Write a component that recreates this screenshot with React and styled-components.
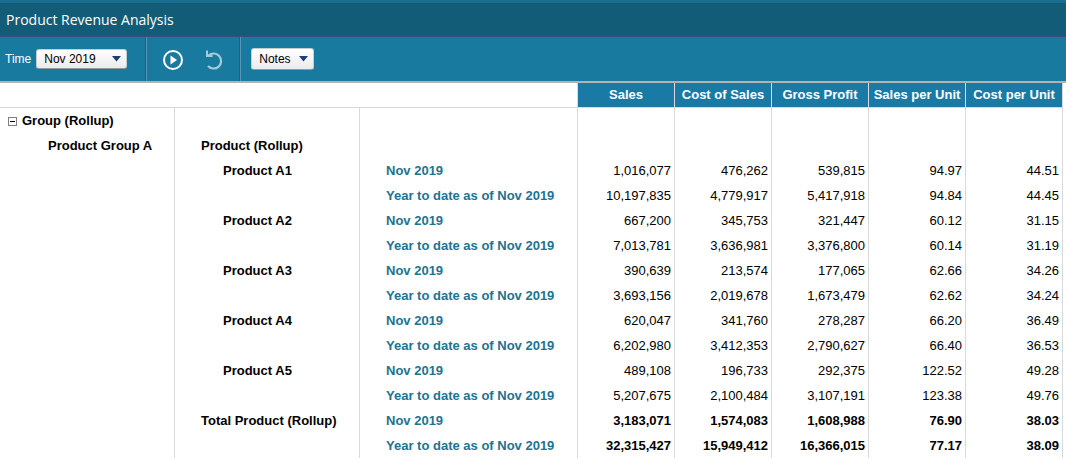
import React from 'react';
import styled, { createGlobalStyle } from 'styled-components';

const GlobalStyle = createGlobalStyle`
  * {
    box-sizing: border-box;
  }

  body {
    margin: 0;
    background: #fff;
    color: #000;
    font-family: "Liberation Sans", Arial, sans-serif;
    font-size: 13px;
  }
`;

const TitleBar = styled.header`
  display: flex;
  align-items: center;
  height: 37px;
  padding: 1px 6px 0;
  background: #135c78;
  border-top: 3px solid #196e90;
  border-bottom: 1px solid #37507f;
`;

const Title = styled.h1`
  margin: 0;
  color: #fff;
  font-family: "Open Sans", "Segoe UI", sans-serif;
  font-size: 14px;
  font-weight: 400;
  line-height: 20px;
`;

const Toolbar = styled.div`
  display: flex;
  height: 46px;
  background: #187a9f;
  border-bottom: 2px solid #b2b2b2;
`;

const Group = styled.div`
  display: flex;
  align-items: center;
  gap: ${props => props.$gap || 0}px;
  padding: ${props => props.$padding};
  border-right: ${props => (props.$divider ? '1px solid #5498b2' : 'none')};
  box-shadow: ${props => (props.$divider ? 'inset -1px 0 #146784' : 'none')};
`;

const Label = styled.label`
  color: #fff;
  font-size: 12px;
  line-height: 20px;
`;

const Picker = styled.div`
  display: grid;
  align-items: center;
  width: ${props => props.$width}px;

  > * {
    grid-area: 1 / 1;
  }
`;

const Select = styled.select`
  appearance: none;
  width: 100%;
  height: ${props => props.$height}px;
  margin: 0;
  padding: 0 20px 0 7px;
  border: 1px solid #c3ccd0;
  border-bottom-color: #999;
  border-radius: 3px;
  background: linear-gradient(#fff, #ebebeb);
  color: #000;
  font-family: inherit;
  font-size: 12px;
`;

const Arrow = styled.svg`
  justify-self: end;
  margin-right: 6px;
  pointer-events: none;
`;

const IconButton = styled.button`
  display: flex;
  padding: 0;
  border: 0;
  background: none;
  cursor: pointer;
`;

const Scroller = styled.main`
  padding-right: 3px;
`;

const Table = styled.table`
  width: 100%;
  table-layout: fixed;
  border-collapse: separate;
  border-spacing: 0;
`;

const Col = styled.col`
  width: ${props => (props.$width ? props.$width + 'px' : 'auto')};
`;

const HeadCell = styled.th`
  height: 25px;
  padding: 0;
  border-right: 1px solid #d9d9d9;
  border-bottom: 1px solid #d9d9d9;
  background: #187aa5;
  color: #fff;
  font-size: 13px;
  line-height: 24px;
  white-space: nowrap;
`;

const Corner = styled.td`
  height: 25px;
  padding: 0;
  border-right: ${props => (props.$last ? '1px solid #d9d9d9' : 'none')};
  border-bottom: 1px solid #d9d9d9;
`;

const Cell = styled.td`
  height: 25px;
  padding: 0 3px 0 ${props => props.$indent || 3}px;
  border-right: 1px solid #d9d9d9;
  line-height: 24px;
  white-space: nowrap;
`;

const NameCell = styled(Cell)`
  font-weight: 700;
`;

const PeriodCell = styled(Cell)`
  color: #207491;
  font-weight: 700;
`;

const NumberCell = styled(Cell)`
  font-weight: ${props => (props.$total ? 700 : 400)};
  text-align: right;
`;

const Toggle = styled.button`
  display: inline-flex;
  margin: 0 5px 0 0;
  padding: 0;
  border: 0;
  background: none;
  vertical-align: -1px;
`;

const COLUMNS = ['Sales', 'Cost of Sales', 'Gross Profit', 'Sales per Unit', 'Cost per Unit'];
const BLANK = ['', '', '', '', ''];
const MONTH = 'Nov 2019';
const YTD = 'Year to date as of Nov 2019';

const ROWS = [
  { group: 'Group (Rollup)', expandable: true, values: BLANK },
  { group: 'Product Group A', product: 'Product (Rollup)', values: BLANK },
  { product: 'Product A1', leaf: true, period: MONTH, values: ['1,016,077', '476,262', '539,815', '94.97', '44.51'] },
  { period: YTD, values: ['10,197,835', '4,779,917', '5,417,918', '94.84', '44.45'] },
  { product: 'Product A2', leaf: true, period: MONTH, values: ['667,200', '345,753', '321,447', '60.12', '31.15'] },
  { period: YTD, values: ['7,013,781', '3,636,981', '3,376,800', '60.14', '31.19'] },
  { product: 'Product A3', leaf: true, period: MONTH, values: ['390,639', '213,574', '177,065', '62.66', '34.26'] },
  { period: YTD, values: ['3,693,156', '2,019,678', '1,673,479', '62.62', '34.24'] },
  { product: 'Product A4', leaf: true, period: MONTH, values: ['620,047', '341,760', '278,287', '66.20', '36.49'] },
  { period: YTD, values: ['6,202,980', '3,412,353', '2,790,627', '66.40', '36.53'] },
  { product: 'Product A5', leaf: true, period: MONTH, values: ['489,108', '196,733', '292,375', '122.52', '49.28'] },
  { period: YTD, values: ['5,207,675', '2,100,484', '3,107,191', '123.38', '49.76'] },
  { product: 'Total Product (Rollup)', total: true, period: MONTH, values: ['3,183,071', '1,574,083', '1,608,988', '76.90', '38.03'] },
  { total: true, period: YTD, values: ['32,315,427', '15,949,412', '16,366,015', '77.17', '38.09'] },
];

function DownArrow() {
  return (
    <Arrow width="9" height="6" viewBox="0 0 9 6" aria-hidden="true">
      <path d="M0 0h9L4.5 5.5z" fill="#1f3f7c" />
    </Arrow>
  );
}

function PlayIcon() {
  return (
    <svg width="20" height="20" viewBox="0 0 20 20" aria-hidden="true">
      <circle cx="10" cy="10" r="9" fill="none" stroke="#fff" strokeWidth="2" />
      <path d="M7.5 5.5v9l6.5-4.5z" fill="#fff" />
    </svg>
  );
}

function UndoIcon() {
  return (
    <svg width="18" height="20" viewBox="0 0 18 20" fill="none" stroke="#a5cbd9" aria-hidden="true">
      <path d="M3.5 5.5A7.5 7.5 0 1 1 3 16" strokeWidth="2.2" />
      <path d="M2 0.5V6H7.5" strokeWidth="2" />
    </svg>
  );
}

function ReportRow({ row }) {
  return (
    <tr>
      <NameCell $indent={row.expandable ? 8 : 48}>
        {row.expandable && (
          <Toggle type="button" aria-label="Collapse group">
            <svg width="9" height="9" viewBox="0 0 9 9">
              <rect x="0.5" y="0.5" width="8" height="8" fill="#fff" stroke="#808080" />
              <path d="M2 4.5h5" stroke="#000" />
            </svg>
          </Toggle>
        )}
        {row.group}
      </NameCell>
      <NameCell $indent={row.leaf ? 48 : 26}>{row.product}</NameCell>
      <PeriodCell $indent={26}>{row.period}</PeriodCell>
      {row.values.map((value, i) => (
        <NumberCell key={COLUMNS[i]} $total={row.total}>{value}</NumberCell>
      ))}
    </tr>
  );
}

function App() {
  return (
    <>
      <GlobalStyle />
      <TitleBar>
        <Title>Product Revenue Analysis</Title>
      </TitleBar>
      <Toolbar>
        <Group $divider $gap={5} $padding="0 19px 0 5px">
          <Label htmlFor="time">Time</Label>
          <Picker $width={91}>
            <Select id="time" $height={20} defaultValue={MONTH}>
              <option>{MONTH}</option>
            </Select>
            <DownArrow />
          </Picker>
        </Group>
        <Group $divider $gap={22} $padding="2px 17px 0 16px">
          <IconButton type="button" aria-label="Run">
            <PlayIcon />
          </IconButton>
          <IconButton type="button" aria-label="Undo">
            <UndoIcon />
          </IconButton>
        </Group>
        <Group $padding="0 10px">
          <Picker $width={63}>
            <Select aria-label="Notes" $height={22} defaultValue="Notes">
              <option>Notes</option>
            </Select>
            <DownArrow />
          </Picker>
        </Group>
      </Toolbar>
      <Scroller>
        <Table>
          <colgroup>
            <Col $width={175} />
            <Col $width={185} />
            <Col $width={218} />
            {COLUMNS.map(name => <Col key={name} />)}
          </colgroup>
          <thead>
            <tr>
              <Corner />
              <Corner />
              <Corner $last />
              {COLUMNS.map(name => <HeadCell key={name} scope="col">{name}</HeadCell>)}
            </tr>
          </thead>
          <tbody>
            {ROWS.map((row, i) => <ReportRow key={i} row={row} />)}
          </tbody>
        </Table>
      </Scroller>
    </>
  );
}

export default App;
